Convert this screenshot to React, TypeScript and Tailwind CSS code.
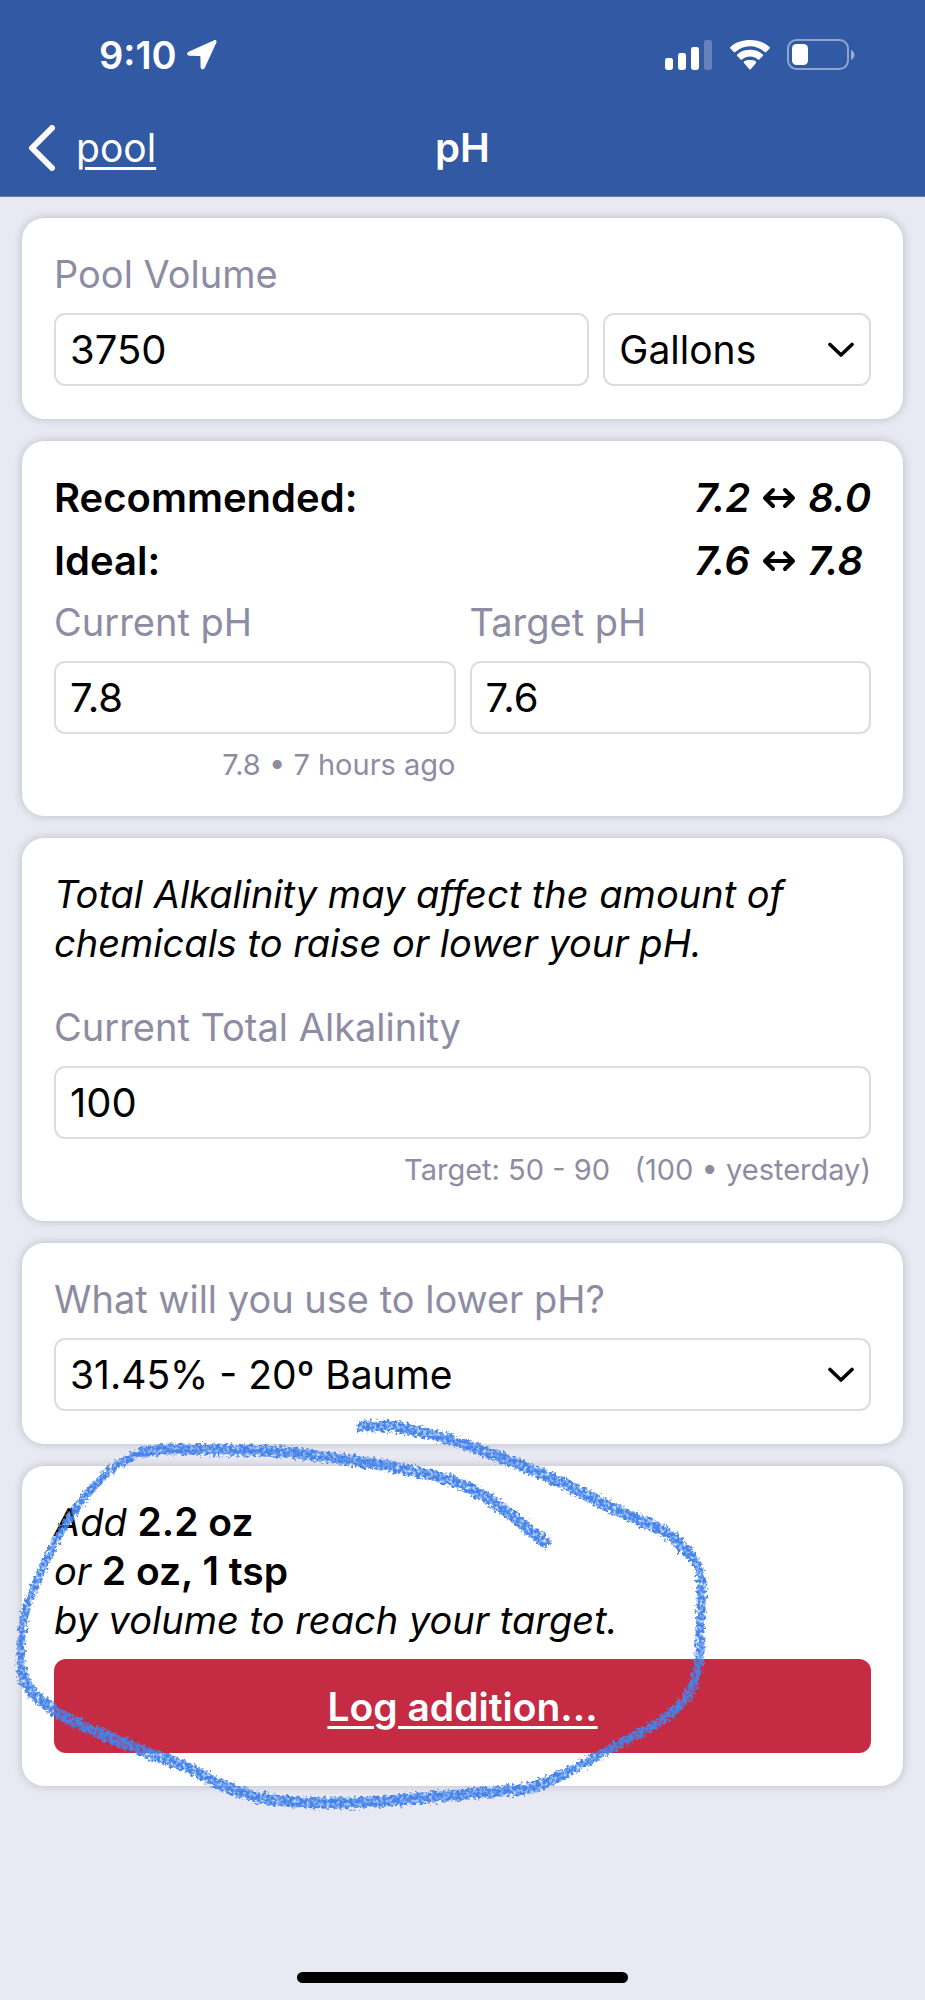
import type { ReactNode } from "react";
import { useState } from "react";

type Point = [number, number];

interface Stroke {
  width: number;
  points: Point[];
}

/** Marker circle around the result, split where the pen pressure changes. */
const markerStrokes: Stroke[] = [
  {
    width: 11,
    points: [
      [362, 1426], [395, 1427], [430, 1434], [470, 1446], [525, 1467],
      [562, 1483], [612, 1508], [665, 1532], [689, 1554],
    ],
  },
  {
    width: 9,
    points: [
      [665, 1532], [689, 1552], [701, 1577], [701, 1605], [700, 1633],
      [699, 1663], [689, 1693], [662, 1720], [612, 1748], [562, 1775],
    ],
  },
  {
    width: 11,
    points: [
      [562, 1775], [529, 1788], [479, 1793], [433, 1797], [350, 1803],
      [267, 1799], [217, 1783], [187, 1767], [133, 1747], [67, 1718],
      [33, 1693], [22, 1673],
    ],
  },
  {
    width: 8,
    points: [
      [33, 1693], [22, 1673], [21, 1647], [27, 1607], [53, 1547],
      [77, 1507], [113, 1468], [143, 1452],
    ],
  },
  {
    width: 11,
    points: [
      [143, 1452], [167, 1449], [220, 1450], [283, 1452], [340, 1459],
      [393, 1467], [450, 1480], [469, 1488], [495, 1503], [520, 1522],
      [545, 1542],
    ],
  },
];

/** Smooth curve through all points. */
function toPath(points: Point[]): string {
  let d = `M${points[0][0]} ${points[0][1]}`;
  for (let i = 0; i < points.length - 1; i++) {
    const p0 = points[i - 1] ?? points[i];
    const p1 = points[i];
    const p2 = points[i + 1];
    const p3 = points[i + 2] ?? p2;
    d += ` C${p1[0] + (p2[0] - p0[0]) / 6} ${p1[1] + (p2[1] - p0[1]) / 6}`;
    d += ` ${p2[0] - (p3[0] - p1[0]) / 6} ${p2[1] - (p3[1] - p1[1]) / 6}`;
    d += ` ${p2[0]} ${p2[1]}`;
  }
  return d;
}

function MarkerCircle() {
  return (
    <svg
      className="pointer-events-none absolute -left-[22px] -top-[66px] h-[420px] w-[740px]"
      viewBox="0 1400 740 420"
      fill="none"
      aria-hidden="true"
    >
      <defs>
        <filter
          id="crayon"
          filterUnits="userSpaceOnUse"
          x="0"
          y="1400"
          width="740"
          height="420"
          colorInterpolationFilters="sRGB"
        >
          <feTurbulence type="fractalNoise" baseFrequency="0.3" numOctaves="3" seed="4" result="noise" />
          <feDisplacementMap in="SourceGraphic" in2="noise" scale="9" xChannelSelector="R" yChannelSelector="G" result="rough" />
          <feColorMatrix in="noise" type="matrix" values="0 0 0 0 0  0 0 0 0 0  0 0 0 0 0  0 0 2 0 -0.15" result="grain" />
          <feComposite in="rough" in2="grain" operator="in" result="chalk" />
          <feGaussianBlur in="chalk" stdDeviation="0.5" />
        </filter>
      </defs>
      <g
        filter="url(#crayon)"
        stroke="#4484ea"
        strokeLinecap="round"
        strokeLinejoin="round"
      >
        {markerStrokes.map((stroke, i) => (
          <path key={i} d={toPath(stroke.points)} strokeWidth={stroke.width} />
        ))}
      </g>
    </svg>
  );
}

function StatusBar() {
  return (
    <div className="flex h-[110px] items-center justify-between pl-[99px] pr-[70px]">
      <div className="flex items-center gap-[10px]">
        <span className="text-[38px] font-semibold leading-none">9:10</span>
        <svg className="h-[30px] w-[30px]" viewBox="0 0 30 30" fill="currentColor">
          <title>Location</title>
          <path d="M27.2.3 1.6 11.7C-.6 12.8-.2 15.7 2.2 15.8L12.8 16c.4 0 .6.2.6.6l.2 10.6c.1 2.4 3.2 2.9 4.2.6L29.4 2.6C30.1 1 28.8-.4 27.2.3Z" />
        </svg>
      </div>
      <div className="flex items-center gap-4">
        <svg className="h-[30px] w-[48px]" viewBox="0 0 48 30" fill="currentColor">
          <title>Signal</title>
          <rect x="0" y="18" width="8" height="12" rx="2.4" />
          <rect x="13" y="13" width="8" height="17" rx="2.4" />
          <rect x="26" y="7" width="8" height="23" rx="2.4" />
          <rect x="39" y="0" width="8" height="30" rx="2.4" opacity="0.25" />
        </svg>
        <svg className="h-[30px] w-[42px]" viewBox="0 0 42 30" fill="currentColor">
          <title>Wi-Fi</title>
          <path d="M21 6.2c5.6 0 10.8 2.2 14.7 5.9.4.4 1 .4 1.4 0l3.5-3.6c.4-.4.4-1 0-1.4C35.3 2 28.3 0 21 0S6.7 2 1.4 7.1c-.4.4-.4 1 0 1.4l3.5 3.6c.4.4 1 .4 1.4 0C10.2 8.4 15.4 6.2 21 6.2Z" />
          <path d="M21 16.4c3 0 5.8 1.1 7.9 3.1.4.4 1 .4 1.4 0l3.5-3.6c.4-.4.4-1.1 0-1.5C30.3 11.1 25.8 9.7 21 9.7s-9.3 1.4-12.8 4.7c-.4.4-.4 1.1 0 1.5l3.5 3.6c.4.4 1 .4 1.4 0 2.1-2 4.9-3.1 7.9-3.1Z" />
          <path d="M27 23c.4-.4.4-1 0-1.4C25.3 20.3 23.2 20 21 20s-4.3.3-6 1.6c-.4.4-.4 1 0 1.4l5.3 6.2c.4.4 1 .4 1.4 0Z" />
        </svg>
        <svg className="h-[32px] w-[68px]" viewBox="0 0 68 32" fill="none">
          <title>Battery</title>
          <rect x="1" y="1" width="60" height="29" rx="8.5" stroke="#fff" strokeWidth="2" opacity="0.45" />
          <path d="M64 11v10c2-.9 3.6-2.8 3.6-5S66 11.9 64 11Z" fill="#fff" opacity="0.5" />
          <rect x="5" y="5" width="16" height="21" rx="4.5" fill="#fff" />
        </svg>
      </div>
    </div>
  );
}

function Card({ children }: { children: ReactNode }) {
  return (
    <section className="relative rounded-[22px] bg-white px-8 pt-8 pb-[33px] shadow-[0_0_10px_rgba(0,0,0,0.2)]">
      {children}
    </section>
  );
}

const fieldClass =
  "block h-[73px] w-full rounded-[11px] border-2 border-[#dcdce2] bg-white px-[14px] text-black outline-none";

const labelClass = "block text-[38px] leading-[49px] text-[#8e8ca3]";

interface FieldProps {
  id: string;
  label: string;
  initial: string;
  hint?: string;
}

function NumberField({ id, label, initial, hint }: FieldProps) {
  const [value, setValue] = useState(initial);

  return (
    <div>
      <label htmlFor={id} className={labelClass}>
        {label}
      </label>
      <input
        id={id}
        type="text"
        inputMode="decimal"
        value={value}
        onChange={(e) => setValue(e.target.value)}
        className={`mt-[14px] text-[40px] ${fieldClass}`}
      />
      {hint && (
        <p className="mt-[13px] whitespace-pre text-right text-[29px] leading-9 text-[#8e8ca3]">
          {hint}
        </p>
      )}
    </div>
  );
}

interface DropdownProps {
  id: string;
  options: string[];
  ariaLabel?: string;
}

function Dropdown({ id, options, ariaLabel }: DropdownProps) {
  return (
    <div className="relative">
      <select
        id={id}
        aria-label={ariaLabel}
        className={`appearance-none text-[39px] ${fieldClass}`}
      >
        {options.map((option) => (
          <option key={option}>{option}</option>
        ))}
      </select>
      <svg
        className="pointer-events-none absolute right-[17px] top-[29px] h-4 w-[26px]"
        viewBox="0 0 26 16"
        fill="none"
        stroke="#000"
        strokeWidth="3.6"
        strokeLinecap="round"
        strokeLinejoin="round"
        aria-hidden="true"
      >
        <path d="M2 2.5 13 13 24 2.5" />
      </svg>
    </div>
  );
}

function RangeRow({ label, low, high }: { label: string; low: string; high: string }) {
  return (
    <>
      <dt>{label}</dt>
      <dd className="flex items-center italic">
        {low}
        <svg
          className="mx-3 h-[22px] w-[34px]"
          viewBox="0 0 34 22"
          fill="none"
          stroke="currentColor"
          strokeWidth="4"
          strokeLinecap="round"
          strokeLinejoin="round"
        >
          <title>to</title>
          <path d="M3 11h28M11 3l-8 8 8 8M23 3l8 8-8 8" />
        </svg>
        {high}
      </dd>
    </>
  );
}

export default function App() {
  return (
    <div className="flex min-h-screen flex-col bg-[#e9e9f4] font-['Inter',sans-serif] text-[40px] leading-[49px] text-black">
      <header className="border-b border-[#6f7a9c] bg-[#3259a4] text-white">
        <StatusBar />
        <nav className="grid h-[86px] grid-cols-3 items-start pt-[13px]">
          <a href="#pool" className="flex items-center gap-[21px] pl-[28px]">
            <svg
              className="h-[46px] w-[27px]"
              viewBox="0 0 27 46"
              fill="none"
              stroke="currentColor"
              strokeWidth="6"
              strokeLinecap="round"
              strokeLinejoin="round"
              aria-hidden="true"
            >
              <path d="M24 3 4 23l20 20" />
            </svg>
            <span className="text-[39px] underline decoration-[3px] underline-offset-[5px]">
              pool
            </span>
          </a>
          <h1 className="text-center font-semibold">pH</h1>
        </nav>
      </header>

      <main className="flex flex-col gap-[22px] px-[22px] pt-[21px]">
        <Card>
          <div className="grid grid-cols-[2fr_1fr] items-end gap-[14px]">
            <NumberField id="volume" label="Pool Volume" initial="3750" />
            <Dropdown id="unit" ariaLabel="Volume unit" options={["Gallons", "Liters"]} />
          </div>
        </Card>

        <Card>
          <dl className="mb-[13px] grid grid-cols-[1fr_auto] gap-y-[14px] font-semibold">
            <RangeRow label="Recommended:" low="7.2" high="8.0" />
            <RangeRow label="Ideal:" low="7.6" high="7.8" />
          </dl>
          <div className="grid grid-cols-2 gap-[14px]">
            <NumberField id="current-ph" label="Current pH" initial="7.8" hint="7.8 • 7 hours ago" />
            <NumberField id="target-ph" label="Target pH" initial="7.6" />
          </div>
        </Card>

        <Card>
          <p className="mb-[35px] text-[38px] italic leading-[49px]">
            Total Alkalinity may affect the amount of
            <br />
            chemicals to raise or lower your pH.
          </p>
          <NumberField
            id="alkalinity"
            label="Current Total Alkalinity"
            initial="100"
            hint={"Target: 50 - 90   (100 • yesterday)"}
          />
        </Card>

        <Card>
          <label htmlFor="chemical" className={`mb-[14px] ${labelClass}`}>
            What will you use to lower pH?
          </label>
          <Dropdown
            id="chemical"
            options={["31.45% - 20º Baume", "28.3% - 18º Baume", "14.5% - 10º Baume"]}
          />
        </Card>

        <Card>
          <p className="text-[38px] italic leading-[49px]">
            Add <b className="text-[39px] font-semibold not-italic leading-none">2.2 oz</b>
            <br />
            or <b className="text-[39px] font-semibold not-italic leading-none">2 oz, 1 tsp</b>
            <br />
            by volume to reach your target.
          </p>
          <button
            type="button"
            className="mt-[14px] block h-[94px] w-full cursor-pointer rounded-[12px] bg-[#c52b43] text-[39px] font-semibold text-white underline decoration-[3px] underline-offset-[5px]"
          >
            Log addition...
          </button>
          <MarkerCircle />
        </Card>
      </main>

      <div className="mx-auto mt-auto mb-[17px] h-[11px] w-[331px] rounded-full bg-black" />
    </div>
  );
}
